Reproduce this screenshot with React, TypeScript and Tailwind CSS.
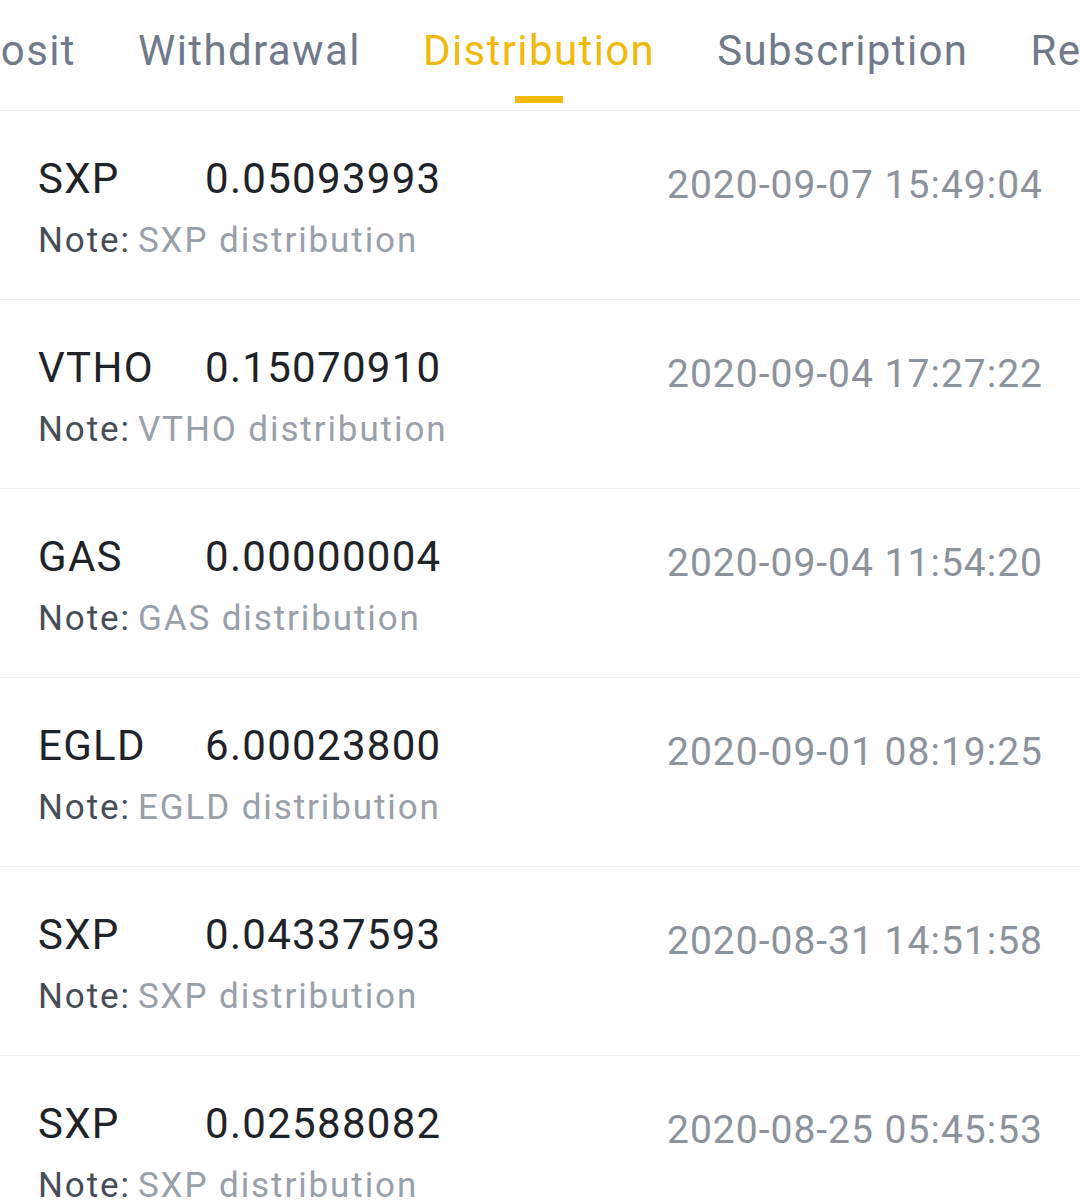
import React from "react";

const rows = [
  { coin: "SXP", amount: "0.05093993", date: "2020-09-07 15:49:04" },
  { coin: "VTHO", amount: "0.15070910", date: "2020-09-04 17:27:22" },
  { coin: "GAS", amount: "0.00000004", date: "2020-09-04 11:54:20" },
  { coin: "EGLD", amount: "6.00023800", date: "2020-09-01 08:19:25" },
  { coin: "SXP", amount: "0.04337593", date: "2020-08-31 14:51:58" },
  { coin: "SXP", amount: "0.02588082", date: "2020-08-25 05:45:53" },
];

export default function App() {
  return (
    <div
      className="w-[1080px] h-[1200px] overflow-hidden bg-white"
      style={{ fontFamily: "Roboto, 'Noto Sans', sans-serif" }}
    >
      <div className="h-[111px] border-b border-[#eaecef] overflow-hidden">
        <div className="flex items-start whitespace-nowrap pt-[30px] text-[42px] leading-[42px] tracking-[1.4px] text-[#707a8a]">
          <div className="w-[76px] shrink-0 flex justify-end">
            <span>Deposit</span>
          </div>
          <div className="flex gap-[62px] ml-[62px]">
            <span>Withdrawal</span>
            <div className="flex flex-col items-center">
              <span className="text-[#f0b90b]">Distribution</span>
              <div className="mt-[24px] w-[48px] h-[7px] bg-[#f0b90b]" />
            </div>
            <span>Subscription</span>
            <span>Redemption</span>
          </div>
        </div>
      </div>
      {rows.map((r, i) => (
        <div
          key={i}
          className="h-[189px] border-b border-[#eaecef] flex justify-between pl-[38px] pr-[37px]"
        >
          <div className="pt-[47px]">
            <div className="flex text-[42px] leading-[42px] text-[#1e2329] tracking-[1.3px]">
              <span className="w-[167px] shrink-0">{r.coin}</span>
              <span>{r.amount}</span>
            </div>
            <div className="mt-[23px] text-[35px] leading-[35px] tracking-[1.9px] whitespace-nowrap">
              <span className="text-[#474d57]">Note:</span>
              <span className="text-[#9aa0aa] ml-[7px]">{r.coin} distribution</span>
            </div>
          </div>
          <div className="pt-[55px] text-[39px] leading-[39px] tracking-[1px] text-[#8d939c] whitespace-nowrap">
            {r.date}
          </div>
        </div>
      ))}
    </div>
  );
}
